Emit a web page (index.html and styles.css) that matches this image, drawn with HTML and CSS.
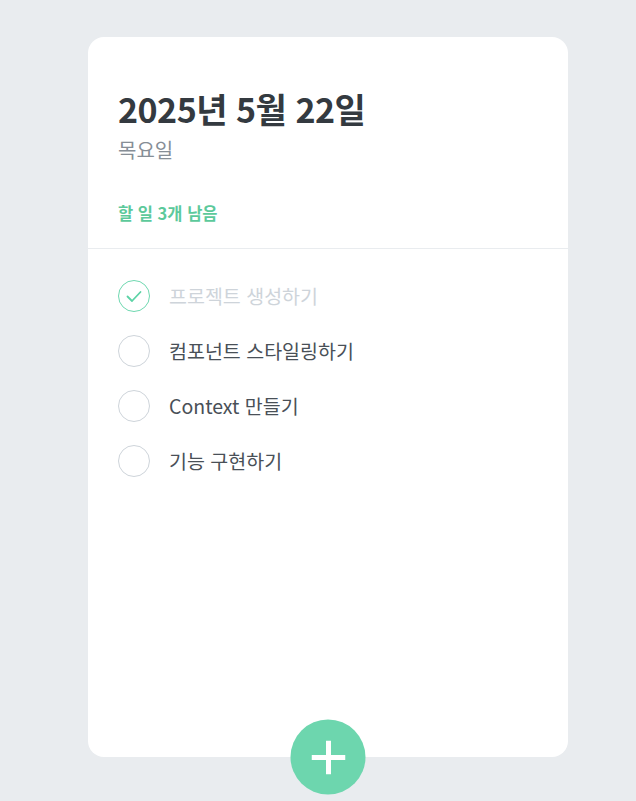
FILE: index.html
```html
<!DOCTYPE html>
<html lang="ko">
<head>
<meta charset="utf-8">
<link rel="stylesheet" href="styles.css">
</head>
<body>
<div class="template">
  <div class="head">
    <h1>2025년 5월 22일</h1>
    <div class="day">목요일</div>
    <div class="tasks-left">할 일 3개 남음</div>
  </div>
  <div class="list">
    <div class="item done">
      <div class="circle"><svg width="20" height="20" viewBox="0 0 20 20"><path d="M3.5 10.5 L8 15 L16.5 6" fill="none" stroke="#5cd3a6" stroke-width="1.8" stroke-linecap="round" stroke-linejoin="round"/></svg></div>
      <div class="text">프로젝트 생성하기</div>
    </div>
    <div class="item">
      <div class="circle"></div>
      <div class="text">컴포넌트 스타일링하기</div>
    </div>
    <div class="item">
      <div class="circle"></div>
      <div class="text">Context 만들기</div>
    </div>
    <div class="item">
      <div class="circle"></div>
      <div class="text">기능 구현하기</div>
    </div>
  </div>
  <button class="add"><svg width="34" height="34" viewBox="0 0 34 34"><path d="M17 0 V34 M0 17 H34" stroke="#fff" stroke-width="5"/></svg></button>
</div>
</body>
</html>
```
FILE: styles.css
```css
html, body {
  margin: 0;
  padding: 0;
  background: #e9ecef;
  font-family: "Noto Sans CJK KR", "Noto Sans", sans-serif;
}
body {
  padding: 37px 0 44px 88px;
}
.template {
  position: relative;
  width: 480px;
  height: 720px;
  background: #fff;
  border-radius: 16px;
  display: flex;
  flex-direction: column;
}
.head {
  padding: 51px 30px 23px;
  border-bottom: 1px solid #e9ecef;
}
.head h1 {
  margin: 0;
  font-size: 34px;
  letter-spacing: -0.5px;
  line-height: 42px;
  font-weight: 700;
  color: #343a40;
}
.day {
  margin-top: 5px;
  font-size: 20px;
  line-height: 30px;
  color: #868e96;
}
.tasks-left {
  margin-top: 36px;
  font-size: 16.5px;
  line-height: 24px;
  font-weight: 700;
  color: #5cc99b;
}
.list {
  padding: 19px 30px 48px;
}
.item {
  display: flex;
  align-items: center;
  padding: 11.5px 0;
}
.circle {
  box-sizing: border-box;
  width: 32px;
  height: 32px;
  border-radius: 50%;
  border: 1px solid #ced4da;
  display: flex;
  align-items: center;
  justify-content: center;
  margin-right: 19px;
}
.item.done .circle {
  border-color: #6fd8b0;
}
.text {
  font-size: 19.5px;
  line-height: 28px;
  color: #495057;
}
.item.done .text {
  color: #ced4da;
}
.add {
  position: absolute;
  left: 50%;
  bottom: 0;
  transform: translate(-50%, 50%);
  width: 75px;
  height: 75px;
  border: none;
  border-radius: 50%;
  background: #6dd6ae;
  padding: 0;
  display: flex;
  align-items: center;
  justify-content: center;
}
```
